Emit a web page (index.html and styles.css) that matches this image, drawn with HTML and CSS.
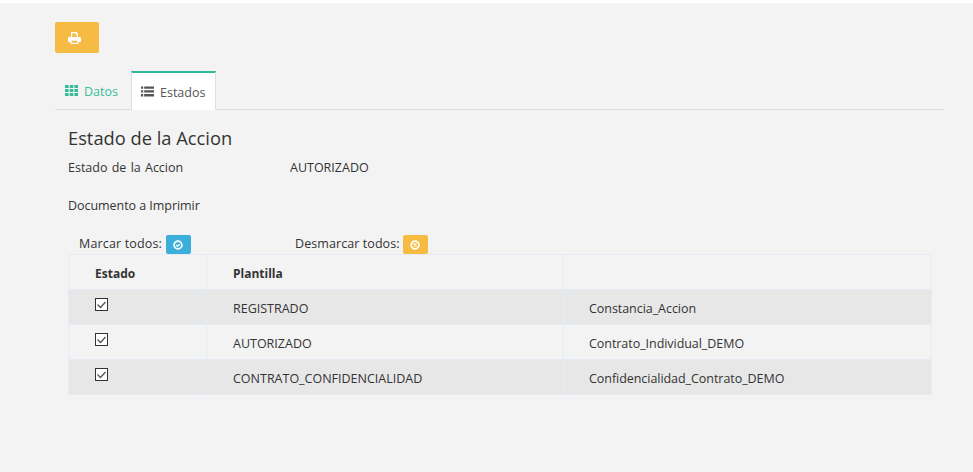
FILE: index.html
```html
<!DOCTYPE html>
<html lang="es">
<head>
<meta charset="utf-8">
<title>Estado de la Accion</title>
<link rel="stylesheet" href="styles.css">
</head>
<body>
<div class="page">
  <button class="print-btn" type="button" aria-label="Imprimir">
    <svg class="print-icon" viewBox="0 0 13 12" width="13" height="12"><path fill="#fff" fill-rule="evenodd" d="M3 0h5.500L10 1.500V5h1.600c.8 0 1.400.6 1.400 1.400V10h-2.500v2h-8v-2H0V6.400C0 5.600.6 5 1.400 5H3zM4.200 1.200V5h4.600V2.400H7.600V1.200zM3.700 8.700v2.100h5.600V8.700z"/></svg>
  </button>
  <div class="tabs">
    <div class="tab">
      <svg class="tab-icon" viewBox="0 0 13 11" width="13" height="11"><path fill="#36bc9b" d="M0 0h3.600v3.100H0zM4.700 0h3.600v3.100H4.700zM9.400 0H13v3.100H9.400zM0 3.950h3.600v3.100H0zM4.700 3.950h3.600v3.100H4.700zM9.400 3.950H13v3.100H9.400zM0 7.900h3.600V11H0zM4.700 7.900h3.600V11H4.700zM9.400 7.900H13V11H9.400z"/></svg>
      <span>Datos</span>
    </div>
    <div class="tab tab-active">
      <svg class="tab-icon" viewBox="0 0 13 11" width="13" height="11"><path fill="#555" d="M0 .5h2.200v2.300H0zM3.200.5H13v2.300H3.200zM0 4.300h2.200v2.300H0zM3.200 4.300H13v2.300H3.200zM0 8.100h2.200v2.300H0zM3.200 8.100H13v2.300H3.200z"/></svg>
      <span>Estados</span>
    </div>
  </div>
  <section class="content">
    <h3 class="title">Estado de la Accion</h3>
    <div class="field">
      <span class="field-label">Estado de la Accion</span>
      <span>AUTORIZADO</span>
    </div>
    <div class="doc-label">Documento a Imprimir</div>
    <div class="marks">
      <div class="mark mark-on">
        <span class="mark-text">Marcar todos:</span>
        <span class="mini mini-info">
          <svg viewBox="0 0 10 10" width="10" height="10"><circle cx="5" cy="5" r="3.900" fill="none" stroke="#fff" stroke-width="1.700"/><path d="M3.200 5l1.300 1.300 2.300-2.300" fill="none" stroke="#fff" stroke-width="1.200"/></svg>
        </span>
      </div>
      <div class="mark mark-off">
        <span class="mark-text">Desmarcar todos:</span>
        <span class="mini mini-warn">
          <svg viewBox="0 0 10 10" width="10" height="10"><circle cx="5" cy="5" r="3.900" fill="none" stroke="#fff" stroke-width="1.700"/><path d="M3.500 3.500l3 3M6.500 3.500l-3 3" fill="none" stroke="#fff" stroke-width="1.300"/></svg>
        </span>
      </div>
    </div>
    <table class="grid">
      <thead>
        <tr><th>Estado</th><th>Plantilla</th><th></th></tr>
      </thead>
      <tbody>
        <tr>
          <td class="check-cell"><svg class="check" viewBox="0 0 13 13" width="13" height="13"><rect x=".5" y=".5" width="12" height="12" fill="#fff" stroke="#333"/><path d="M2.500 6.500l3 3 5-5.500" fill="none" stroke="#555" stroke-width="1.300"/></svg></td>
          <td>REGISTRADO</td><td>Constancia_Accion</td>
        </tr>
        <tr>
          <td class="check-cell"><svg class="check" viewBox="0 0 13 13" width="13" height="13"><rect x=".5" y=".5" width="12" height="12" fill="#fff" stroke="#333"/><path d="M2.500 6.500l3 3 5-5.500" fill="none" stroke="#555" stroke-width="1.300"/></svg></td>
          <td>AUTORIZADO</td><td>Contrato_Individual_DEMO</td>
        </tr>
        <tr>
          <td class="check-cell"><svg class="check" viewBox="0 0 13 13" width="13" height="13"><rect x=".5" y=".5" width="12" height="12" fill="#fff" stroke="#333"/><path d="M2.500 6.500l3 3 5-5.500" fill="none" stroke="#555" stroke-width="1.300"/></svg></td>
          <td>CONTRATO_CONFIDENCIALIDAD</td><td>Confidencialidad_Contrato_DEMO</td>
        </tr>
      </tbody>
    </table>
  </section>
</div>
</body>
</html>
```
FILE: styles.css
```css
* { box-sizing: border-box; }
html, body { margin: 0; height: 100%; }
body {
  background: #fff;
  font-family: "Open Sans", sans-serif;
  font-size: 12.5px;
  line-height: 17px;
  color: #333;
  overflow: hidden;
}
.page {
  margin-top: 3px;
  height: 469px;
  background: #f3f3f3;
  padding: 19px 29px 0 55px;
}
.print-btn {
  display: flex;
  align-items: center;
  justify-content: flex-start;
  width: 44px;
  height: 31px;
  padding: 0 0 0 13px;
  border: 0;
  border-radius: 2px;
  background: #f6bb42;
}
.tabs {
  display: flex;
  margin-top: 18px;
  height: 39px;
  border-bottom: 1px solid #dcdfe2;
}
.tab {
  display: flex;
  align-items: center;
  gap: 6px;
  width: 76px;
  height: 38px;
  padding: 2px 0 0 10px;
  color: #36bc9b;
}
.tab-active {
  width: 85px;
  height: 39px;
  padding: 2px 0 0 9px;
  background: #fff;
  color: #555;
  border-top: 2px solid #2fb99a;
  border-left: 1px solid #dcdfe2;
  border-right: 1px solid #dcdfe2;
}
.tab-icon { flex: none; margin-top: -2px; }
.content { padding: 0 13px; }
.title {
  margin: 16px 0 0;
  font-size: 18.300px;
  font-weight: 400;
  line-height: 24px;
}
.field {
  display: flex;
  margin-top: 9px;
}
.field-label { width: 222px; word-spacing: 1px; }
.doc-label { margin-top: 21px; letter-spacing: -.05px; }
.marks {
  display: flex;
  margin-top: 21px;
  padding-left: 11px;
  height: 19px;
}
.mark {
  display: flex;
  align-items: flex-start;
  gap: 3px;
}
.mark-text { letter-spacing: .15px; }
.mark-on { width: 216px; gap: 4px; }
.mark-off { gap: 3px; }
.mark-off .mark-text { letter-spacing: .08px; }
.mini {
  display: flex;
  align-items: center;
  justify-content: center;
  width: 25px;
  height: 19px;
  border-radius: 2px;
}
.mini-info { background: #3bafda; }
.mini-warn { background: #f6bb42; }
.grid {
  width: 864px;
  border-collapse: collapse;
  table-layout: fixed;
  border: 1px solid #e3ecf5;
}
.grid th, .grid td {
  border: 1px solid #e3ecf5;
  height: 35px;
  padding: 0 26px;
  text-align: left;
  vertical-align: middle;
}
.grid th { font-size: 12px; font-weight: 700; color: #333; padding-top: 2px; }
.grid td { padding-top: 3px; }
.grid td:nth-child(3) { padding-left: 25px; letter-spacing: -.05px; }
.grid th:nth-child(1) { width: 138px; }
.grid th:nth-child(2) { width: 357px; }
.grid tbody tr:nth-child(odd) { background: #e7e7e8; }
.grid td.check-cell { vertical-align: top; padding-top: 8px; }
.check { display: block; }
```
